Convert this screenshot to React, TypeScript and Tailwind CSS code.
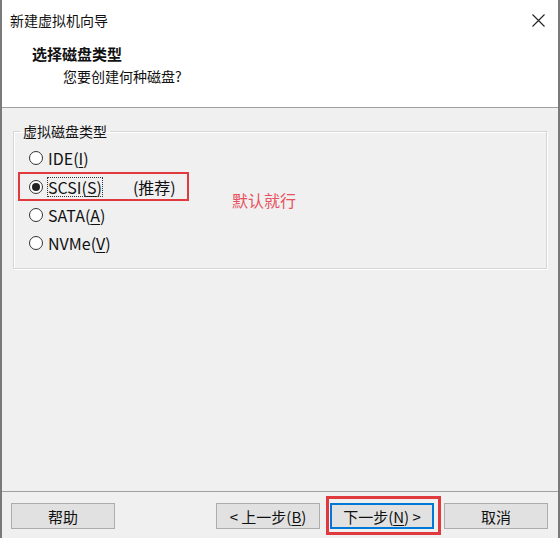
import React from 'react';

const Radio = ({ checked }: { checked?: boolean }) => (
  <span className="w-[14px] h-[14px] rounded-full border border-[#333] bg-white flex items-center justify-center shrink-0">
    {checked && <span className="w-[8px] h-[8px] rounded-full bg-[#222]" />}
  </span>
);

const Option = ({ label, hot }: { label: string; hot: string }) => (
  <div className="h-[28px] flex items-center gap-[5px] pl-[15px]">
    <Radio />
    <span className="leading-[18px]">
      {label}(<span className="underline underline-offset-2">{hot}</span>)
    </span>
  </div>
);

const Btn = ({ children, primary }: { children: React.ReactNode; primary?: boolean }) => (
  <button
    className={
      'w-[104px] h-[26px] bg-[#e1e1e1] text-[15px] text-[#111] leading-none flex items-center justify-center ' +
      (primary ? 'border-2 border-[#0078d7]' : 'border border-[#adadad]')
    }
  >
    {children}
  </button>
);

export default function App() {
  return (
    <div className="w-[560px] h-[538px] bg-[#f0f0f0] border-x-2 border-[#7a7a7a] flex flex-col text-[#111] font-['Noto_Sans_CJK_SC',sans-serif]">
      {/* header */}
      <div className="h-[108px] bg-white border-b border-[#a0a0a0] shrink-0">
        <div className="h-[40px] flex items-center justify-between pl-[8px] pr-[13px]">
          <span className="text-[14px] leading-none">新建虚拟机向导</span>
          <svg width="13" height="13" viewBox="0 0 13 13" className="text-[#222]">
            <path d="M0.5 0.5 L12.5 12.5 M12.5 0.5 L0.5 12.5" stroke="currentColor" strokeWidth="1.1" />
          </svg>
        </div>
        <div className="pl-[30px] pt-[4px] text-[15px] font-bold leading-[20px]">选择磁盘类型</div>
        <div className="pl-[61px] pt-[2px] text-[14px] leading-[20px]">您要创建何种磁盘?</div>
      </div>

      {/* body */}
      <div className="flex-1 px-[11px] pt-[13px]">
        <fieldset className="border border-[#d6d6d6] shadow-[inset_1px_1px_0_#fff,1px_1px_0_#fff] px-0 pb-[11px] pt-[3px] text-[16px]">
          <legend className="ml-[6px] px-[3px] text-[14px] leading-[20px]">虚拟磁盘类型</legend>
          <Option label="IDE" hot="I" />
          <div className="relative">
            <div className="h-[29px] flex items-center gap-[5px] pl-[15px]">
              <Radio checked />
              <span className="outline-1 outline-dotted outline-[#333] leading-[18px]">
                SCSI(<span className="underline underline-offset-2">S</span>)
              </span>
              <span className="ml-[26px] leading-[18px]">(推荐)</span>
            </div>
            <span className="absolute left-[4px] top-0 w-[171px] h-[29px] border-2 border-[#e0393e]" />
            <span className="absolute left-[218px] top-[18px] text-[16px] leading-[20px] text-[#e8505f]">默认就行</span>
          </div>
          <Option label="SATA" hot="A" />
          <Option label="NVMe" hot="V" />
        </fieldset>
      </div>

      {/* footer */}
      <div className="h-[47px] border-t border-[#a0a0a0] shrink-0 flex items-start justify-between pt-[11px] pl-[9px] pr-[10px]">
        <Btn>帮助</Btn>
        <div className="flex gap-[10px]">
          <Btn>
            &lt; 上一步(<span className="underline underline-offset-2">B</span>)
          </Btn>
          <div className="relative">
            <Btn primary>
              下一步(<span className="underline underline-offset-2">N</span>) &gt;
            </Btn>
            <span className="absolute -left-[4px] -right-[7px] -top-[7px] -bottom-[6px] border-[3px] border-[#e0393e]" />
          </div>
          <Btn>取消</Btn>
        </div>
      </div>
    </div>
  );
}
